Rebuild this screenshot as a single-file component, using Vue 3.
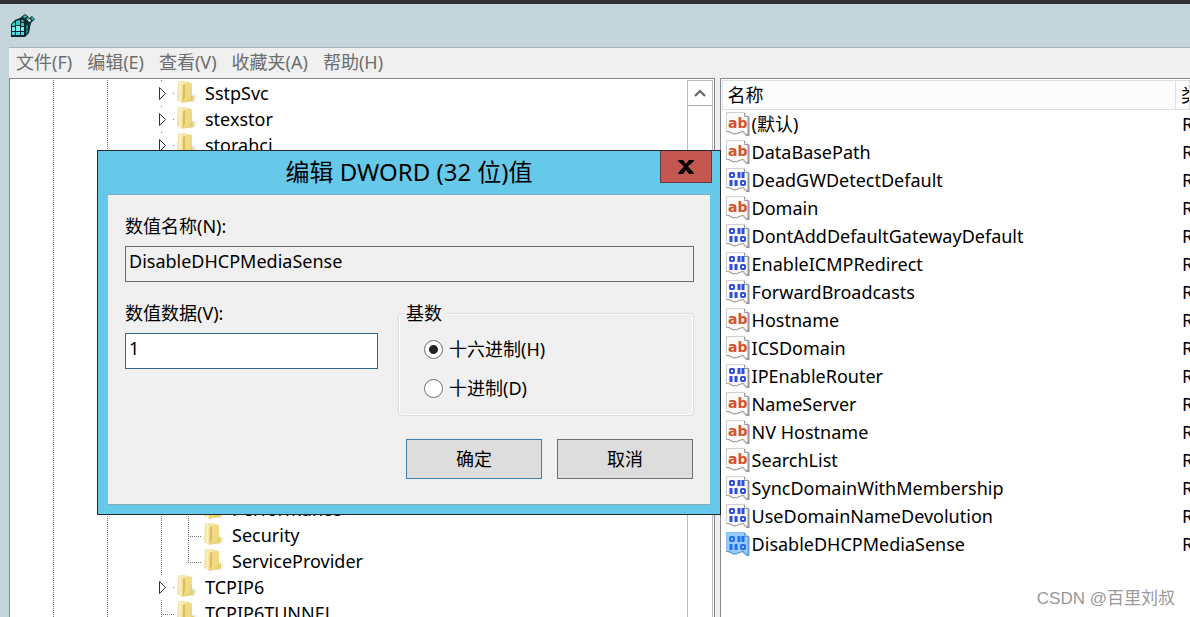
<script setup>
import { ref } from 'vue'

const menus = ['文件(F)', '编辑(E)', '查看(V)', '收藏夹(A)', '帮助(H)']

// guides: 1 draws a vertical dotted line in the cell, 0 leaves it empty
// node: 'arrow' expandable, 'tee' middle leaf, 'end' last leaf
const tree = [
  { name: 'SstpSvc', guides: [1, 0, 1, 0], node: 'arrow' },
  { name: 'stexstor', guides: [1, 0, 1, 0], node: 'arrow' },
  { name: 'storahci', guides: [1, 0, 1, 0], node: 'arrow' },
  { gap: true, guides: [1, 0, 1, 0, 1] },
  { name: 'Performance', guides: [1, 0, 1, 0, 1], node: 'tee' },
  { name: 'Security', guides: [1, 0, 1, 0, 1], node: 'tee' },
  { name: 'ServiceProvider', guides: [1, 0, 1, 0, 1], node: 'end' },
  { name: 'TCPIP6', guides: [1, 0, 1, 0], node: 'arrow' },
  { name: 'TCPIP6TUNNEL', guides: [1, 0, 1, 0], node: 'tee' }
]

const values = [
  { name: '(默认)', kind: 'sz' },
  { name: 'DataBasePath', kind: 'sz' },
  { name: 'DeadGWDetectDefault', kind: 'dword' },
  { name: 'Domain', kind: 'sz' },
  { name: 'DontAddDefaultGatewayDefault', kind: 'dword' },
  { name: 'EnableICMPRedirect', kind: 'dword' },
  { name: 'ForwardBroadcasts', kind: 'dword' },
  { name: 'Hostname', kind: 'sz' },
  { name: 'ICSDomain', kind: 'sz' },
  { name: 'IPEnableRouter', kind: 'dword' },
  { name: 'NameServer', kind: 'sz' },
  { name: 'NV Hostname', kind: 'sz' },
  { name: 'SearchList', kind: 'sz' },
  { name: 'SyncDomainWithMembership', kind: 'dword' },
  { name: 'UseDomainNameDevolution', kind: 'dword' },
  { name: 'DisableDHCPMediaSense', kind: 'dword', selected: true }
]

const valueName = ref('DisableDHCPMediaSense')
const valueData = ref('1')
const base = ref('hex')
</script>

<template>
  <div class="window">
    <header class="titlebar">
      <svg class="app-icon" width="26" height="26" viewBox="0 0 26 26" aria-hidden="true">
        <path d="M1 11 L5 7 L12 4 L21 9 L19 20 L15 24 L1 24 Z" fill="#07282c" />
        <path d="M2 11l3-2v4H2zM6 8l4-1v5H6zM11 10h3v3h-3z" fill="#35c9cb" />
        <path d="M2 14h3v4H2zM6 13h4v5H6zM11 14h3v4h-3z" fill="#7df0ee" />
        <path d="M2 19h3v3H2zM6 19h4v3H6zM11 19h3v3h-3z" fill="#4cdcdc" />
        <path d="M16 13l2-2v4l-2 2zM16 18l2-2v3l-2 2z" fill="#1b9094" />
        <path d="M11 4l4-3 4 3-4 4zM18 6l4-3 3 3-4 4zM16 9l3-1 2 3-3 2z" fill="#0a3438" />
        <path d="M13 4l2-2 2 2-2 1z" fill="#2fc2c6" />
        <path d="M18 7l2-1 1 2-2 1z" fill="#dff" />
        <path d="M21 5l2-1 1 2-2 1z" fill="#37c4c8" />
        <path d="M12 7l2 1-1 1-2-1z" fill="#7df0ee" />
      </svg>
    </header>

    <div class="body">
      <nav class="menubar">
        <button v-for="m in menus" :key="m" type="button">{{ m }}</button>
      </nav>

      <div class="panes">
        <section class="tree-pane">
          <ul class="tree">
            <li v-for="(item, i) in tree" :key="i" :class="{ gap: item.gap }">
              <span v-for="(g, j) in item.guides" :key="j" class="cell" :class="{ line: g }"></span>
              <template v-if="!item.gap">
                <span class="cell" :class="item.node">
                  <svg v-if="item.node === 'arrow'" width="27" height="26" viewBox="0 0 27 26" aria-hidden="true">
                    <path d="M11.5 7.500 L11.5 19.500 L17.500 13.500 Z" fill="#fff" stroke="#333" />
                    <path d="M13 .5h1M25 13.500h1" stroke="#777" />
                  </svg>
                </span>
                <svg class="folder" width="27" height="26" viewBox="0 0 27 26" aria-hidden="true">
                  <defs>
                    <linearGradient id="front" x1="0" x2="1">
                      <stop offset="0" stop-color="#efdc98" />
                      <stop offset=".6" stop-color="#fbf2c4" />
                      <stop offset="1" stop-color="#ecd277" />
                    </linearGradient>
                    <linearGradient id="back" x1="0" x2="1" y1="0" y2="1">
                      <stop offset="0" stop-color="#f8efc0" />
                      <stop offset="1" stop-color="#e8cc58" />
                    </linearGradient>
                    <linearGradient id="shade" x1="0" x2="1">
                      <stop offset="0" stop-color="#c8c8c8" />
                      <stop offset="1" stop-color="#fff" />
                    </linearGradient>
                  </defs>
                  <path d="M9 22 L19 22 L24 16 L17 14 Z" fill="url(#shade)" />
                  <path d="M3 1 L9 1 L17 3 L17 16 L19 17 L19 20 L8 23 L3 20 Z" fill="url(#back)" />
                  <path d="M9 4 L16 3 L16 17 L9 22 Z" fill="#f0da84" />
                  <path d="M8 5 L10 4 L10 17 L8 22 Z" fill="#dcbc5c" />
                  <path d="M3 1 L7 4 L8 23 L2 20 Z" fill="url(#front)" />
                  <path d="M16.500 16.500 h2 v3 l-2 1 Z" fill="#f9e27a" stroke="#e6c95c" />
                </svg>
                <span class="name">{{ item.name }}</span>
              </template>
            </li>
          </ul>
          <div class="scrollbar">
            <button type="button" aria-label="向上滚动">
              <svg width="14" height="10" viewBox="0 0 14 10" aria-hidden="true">
                <path d="M2 8 L7 3 L12 8" fill="none" stroke="#606060" stroke-width="2" />
              </svg>
            </button>
          </div>
        </section>

        <section class="list-pane">
          <table>
            <thead>
              <tr>
                <th>名称</th>
                <th class="type">类</th>
              </tr>
            </thead>
            <tbody>
              <tr v-for="v in values" :key="v.name">
                <td>
                  <div class="value">
                    <svg width="24" height="24" viewBox="0 0 24 24" aria-hidden="true">
                      <path
                        d="M.5 .5 H18.500 L22.500 5 V22.500 H19 L16 19.500 L12 21.500 L8 22.500 L4 20.500 L.5 19.500 Z"
                        :fill="v.selected ? '#99cbfb' : '#fafafa'"
                        :stroke="v.selected ? '#8bbdf0' : '#d0d0d0'"
                      />
                      <path
                        d="M18.500 1 V4.500 H23"
                        fill="none"
                        :stroke="v.selected ? '#689fd5' : '#999'"
                      />
                      <path
                        d="M22.500 5 V23 H20"
                        fill="none"
                        :stroke="v.selected ? '#689fd5' : '#999'"
                        stroke-width="2"
                      />
                      <path
                        d="M0 19.500 H4 V20.500 H6 V21.500 H12 V20.500 H15 V19.500 H18 V21.500 H20"
                        fill="none"
                        :stroke="v.selected ? '#689fd5' : '#aaa'"
                      />
                      <text v-if="v.kind === 'sz'" x="2" y="16" class="glyph">ab</text>
                      <g v-else fill="none" :stroke="v.selected ? '#2370ee' : '#2e4edb'" stroke-width="2">
                        <rect x="4" y="5" width="4" height="4" rx="1" />
                        <path d="M13 4V10M17 4V10" stroke-width="3" />
                        <path d="M5 12V18M10 12V18" stroke-width="3" />
                        <rect x="15" y="13" width="4" height="4" rx="1" />
                      </g>
                    </svg>
                    <span>{{ v.name }}</span>
                  </div>
                </td>
                <td class="type">R</td>
              </tr>
            </tbody>
          </table>
        </section>
      </div>
    </div>

    <form class="dialog" role="dialog" aria-labelledby="dialog-title" @submit.prevent>
      <h1 id="dialog-title">编辑 DWORD (32 位)值</h1>
      <button class="close" type="button" aria-label="关闭">
        <svg width="18" height="16" viewBox="0 0 18 16" aria-hidden="true">
          <path d="M1 1H6L9 5L12 1H17V2L11 7.500L17 14V15H12L9 11L6 15H1V14L7 7.500L1 2Z" fill="#000" />
        </svg>
      </button>
      <div class="content">
        <label for="value-name">数值名称(N):</label>
        <input id="value-name" v-model="valueName" class="field" type="text" readonly />
        <div class="columns">
          <div class="data">
            <label for="value-data">数值数据(V):</label>
            <input id="value-data" v-model="valueData" class="field editable" type="text" />
          </div>
          <fieldset>
            <legend>基数</legend>
            <label class="radio"><input v-model="base" type="radio" name="base" value="hex" />十六进制(H)</label>
            <label class="radio"><input v-model="base" type="radio" name="base" value="dec" />十进制(D)</label>
          </fieldset>
        </div>
        <div class="actions">
          <button class="default" type="submit">确定</button>
          <button type="button">取消</button>
        </div>
      </div>
    </form>

    <div class="watermark">CSDN @百里刘叔</div>
  </div>
</template>

<style>
body {
  margin: 0;
  overflow: hidden;
}
</style>

<style scoped>
* {
  box-sizing: border-box;
}
.window {
  position: relative;
  display: flex;
  flex-direction: column;
  height: 100vh;
  overflow: hidden;
  border-top: 4px solid #302f33;
  background: #c3d5db;
  color: #000;
  font: 18px/26px "Noto Sans", "Noto Sans CJK SC", sans-serif;
}
button,
input {
  font: inherit;
  color: inherit;
}
.titlebar {
  flex: none;
  height: 43px;
  padding: 9px 10px;
}
.app-icon {
  display: block;
}
.body {
  flex: 1;
  min-height: 0;
  display: flex;
  flex-direction: column;
  margin-left: 9px;
  border-top: 1px solid #a9b2bd;
  background: #f0f0f0;
}
.menubar {
  flex: none;
  display: flex;
  gap: 15px;
  height: 30px;
  padding: 0 0 2px 7px;
}
.menubar button {
  padding: 0;
  border: 0;
  background: none;
  color: #6d6d6d;
}
.panes {
  flex: 1;
  min-height: 0;
  display: grid;
  grid-template-columns: 3fr 2fr;
  column-gap: 5px;
}
.tree-pane {
  display: flex;
  min-width: 0;
  min-height: 0;
  overflow: hidden;
  border: 1px solid #828790;
  border-bottom: 0;
  background: #fff;
}
.tree {
  flex: 1;
  margin: 0;
  padding: 1px 0 0 30px;
  list-style: none;
}
.tree li {
  display: flex;
  height: 26px;
}
.tree li.gap {
  height: 338px;
}
.cell {
  flex: none;
  width: 27px;
}
.line {
  background: repeating-linear-gradient(#777 0 1px, transparent 1px 2px) 13px 0 / 1px 100% no-repeat;
}
.tee {
  background:
    repeating-linear-gradient(#777 0 1px, transparent 1px 2px) 13px 0 / 1px 100% no-repeat,
    repeating-linear-gradient(90deg, #777 0 1px, transparent 1px 2px) 13px 14px / 14px 1px no-repeat;
}
.end {
  background:
    repeating-linear-gradient(#777 0 1px, transparent 1px 2px) 13px 0 / 1px 14px no-repeat,
    repeating-linear-gradient(90deg, #777 0 1px, transparent 1px 2px) 13px 14px / 14px 1px no-repeat;
}
.folder {
  flex: none;
}
.tree .name {
  padding-left: 3px;
  white-space: nowrap;
}
.scrollbar {
  flex: none;
  width: 26px;
  margin: 1px 1px 0 0;
  border: 1px solid #bcbcbc;
  border-bottom: 0;
  background: #fff;
}
.scrollbar button {
  display: grid;
  place-items: center;
  width: 100%;
  height: 25px;
  padding: 0;
  border: 0;
  border-bottom: 1px solid #b0b0b0;
  background: #fff;
}
.list-pane {
  min-width: 0;
  min-height: 0;
  overflow: hidden;
  border: solid #828790;
  border-width: 1px 0 0 1px;
  padding: 1px 0 0 1px;
  background: #fff;
}
table {
  width: 100%;
  table-layout: fixed;
  border-collapse: separate;
  border-spacing: 0;
}
th {
  height: 30px;
  padding: 0 0 0 5px;
  border: 1px solid #dfdfdf;
  border-width: 1px 1px 1px 0;
  background: #fcfcfc;
  font-weight: 400;
  text-align: left;
}
th:first-child {
  border-left-width: 1px;
}
td {
  height: 28px;
  padding: 0;
}
.type {
  width: 14px;
  overflow: hidden;
  padding-left: 5px;
  white-space: nowrap;
}
td.type {
  padding-left: 6px;
}
.value {
  display: flex;
  align-items: center;
  gap: 2px;
  padding-left: 4px;
  white-space: nowrap;
}
.value svg {
  flex: none;
}
.glyph {
  fill: #d9512c;
  font: 700 14px "DejaVu Sans", sans-serif;
}
.dialog {
  position: absolute;
  left: 97px;
  top: 146px;
  width: 624px;
  padding: 0 10px 9px 10px;
  border: 1px solid #252a2e;
  background: #66c9ea;
}
.dialog h1 {
  margin: 0;
  padding: 1px 0 2px;
  font-size: 24px;
  font-weight: 400;
  line-height: 40px;
  text-align: center;
}
.close {
  position: absolute;
  top: 0;
  right: 8px;
  display: grid;
  place-items: center;
  width: 52px;
  height: 32px;
  padding: 0;
  border: 1px solid #653a40;
  border-top: 0;
  background: #c4574f;
}
.content {
  padding: 18px 16px 25px 17px;
  border: solid #88a9b8;
  border-width: 1px 0;
  background: #f0f0f0;
}
.content > label,
.data label {
  display: block;
}
.field {
  display: block;
  width: 100%;
  height: 36px;
  margin-top: 7px;
  padding: 0 3px 6px;
  border: 1px solid #707070;
  background: #f0f0f0;
  outline: none;
}
.editable {
  border-color: #2d628b;
  background: #fff;
}
.columns {
  display: grid;
  grid-template-columns: 253px 1fr;
  column-gap: 20px;
  margin-top: 18px;
}
fieldset {
  min-width: 0;
  margin: 0;
  padding: 10px 25px 14px;
  border: 1px solid #d5dfe5;
  border-radius: 4px;
  box-shadow: inset 0 0 0 1px #fff;
}
legend {
  margin-left: -19px;
  padding: 0 1px;
  background: #f0f0f0;
}
.radio {
  display: flex;
  align-items: center;
  gap: 6px;
}
.radio + .radio {
  margin-top: 13px;
}
.radio input {
  appearance: none;
  flex: none;
  width: 19px;
  height: 19px;
  margin: 0;
  border: 1px solid #707070;
  border-radius: 50%;
  background: #fff;
}
.radio input:checked {
  background: radial-gradient(circle, #222 0 4px, #fff 5px);
}
.actions {
  display: flex;
  justify-content: flex-end;
  gap: 15px;
  margin-top: 23px;
  padding-right: 1px;
}
.actions button {
  width: 136px;
  height: 40px;
  padding: 0;
  border: 1px solid #707070;
  background: #ddd;
}
.actions .default {
  border-color: #3c7fb1;
}
.watermark {
  position: absolute;
  right: 15px;
  bottom: 5px;
  color: #999;
  font-size: 17px;
  font-family: "Liberation Sans", "Noto Sans CJK SC", sans-serif;
}
</style>
